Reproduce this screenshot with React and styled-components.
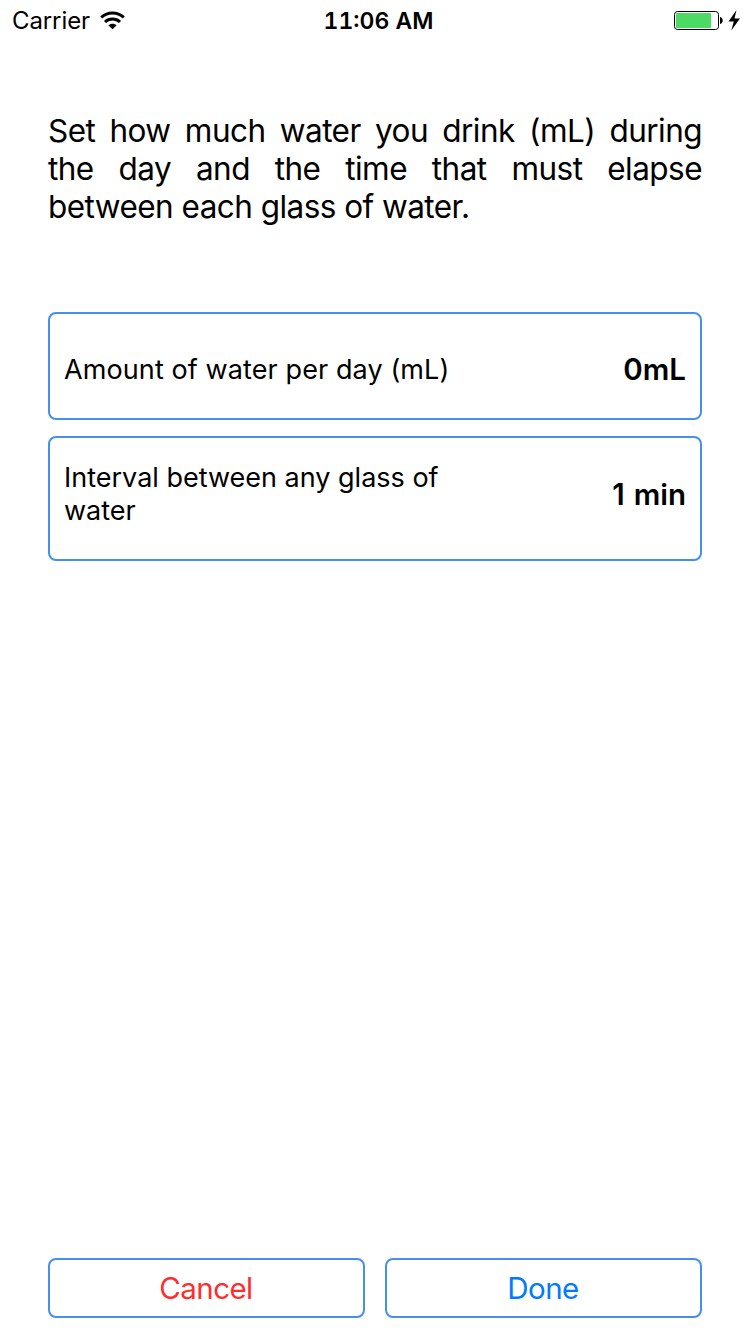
import React from "react";
import styled, { createGlobalStyle } from "styled-components";

const Global = createGlobalStyle`
  * { box-sizing: border-box; }
  body { margin: 0; background: #fff; color: #000; font-family: Inter, "Liberation Sans", sans-serif; }
`;
const Screen = styled.div`
  width: 750px; height: 1334px; display: flex; flex-direction: column; background: #fff; overflow: hidden;
`;
const StatusBar = styled.header`
  height: 41px; display: grid; grid-template-columns: 1fr auto 1fr; align-items: center;
  padding: 0 9px 0 12px;
`;
const Carrier = styled.div`
  display: flex; align-items: center; gap: 10px; font-size: 24px; line-height: 40px; letter-spacing: -0.1px; padding-top: 1px;
  svg { margin-bottom: 2px; }
`;
const Clock = styled.div`
  font-size: 23px; line-height: 40px; font-weight: 600; letter-spacing: 0; padding: 1px 0 0 4px;
  font-variant-numeric: tabular-nums;
`;
const Power = styled.div`
  display: flex; justify-content: flex-end; align-items: center;
`;
const Content = styled.main`
  flex: 1; display: flex; flex-direction: column; padding: 71px 48px 16px;
`;
const Intro = styled.p`
  margin: 0 0 86px; font-size: 31.5px; line-height: 38px; text-align: justify; letter-spacing: -0.54px;
`;
const Field = styled.section`
  height: ${(p) => p.$height}px; margin-bottom: 16px; padding: ${(p) => p.$top}px 14px 0 14px;
  border: 2px solid #4490ec; border-radius: 8px;
  display: flex; align-items: flex-start; justify-content: space-between;
`;
const Label = styled.div`
  width: 400px; font-size: 27px; line-height: 33px; letter-spacing: ${(p) => p.$track || 0}px;
`;
const Value = styled.div`
  font-size: 29.5px; line-height: 33px; font-weight: 600; word-spacing: 1.5px; padding-top: ${(p) => p.$drop || 0}px;
`;
const Actions = styled.footer`
  margin-top: auto; display: grid; grid-template-columns: 1fr 1fr; gap: 20px;
`;
const Button = styled.button`
  height: 60px; border: 2px solid #4490ec; border-radius: 8px; background: #fff; padding: 1px 1px 0 0;
  color: ${(p) => p.$color}; font: 400 29.5px/55px Inter, "Liberation Sans", sans-serif; letter-spacing: -0.55px;
`;

export default function App() {
  return (
    <Screen>
      <Global />
      <StatusBar>
        <Carrier>
          <span>Carrier</span>
          <svg width="25" height="19" viewBox="0 0 25 19" fill="none" stroke="#000" strokeWidth="3">
            <path d="M1.200 6.300C7.700 0.500 17.300 0.500 23.800 6.300" />
            <path d="M5 11c4.200-3.900 10.800-3.900 15 0" />
            <path d="M12.500 18.200l-4.200-3.900c2.400-2.200 6-2.200 8.400 0z" fill="#000" stroke="none" />
          </svg>
        </Carrier>
        <Clock>11:06 AM</Clock>
        <Power>
          <svg width="67" height="21" viewBox="0 0 67 21">
            <rect x="0.500" y="1.500" width="44" height="18" rx="3" fill="#fff" stroke="#000" />
            <rect x="2" y="3" width="35" height="15" rx="1" fill="#4cd964" />
            <path d="M46 7c3.600 .5 3.600 6.500 0 7z" />
            <path d="M62.500 0L54.500 11.500h5.300L57.300 20.500 66 8.500h-5.500z" />
          </svg>
        </Power>
      </StatusBar>
      <Content>
        <Intro>Set how much water you drink (mL) during the day and the time that must elapse between each glass of water.</Intro>
        <Field $height={108} $top={39}>
          <Label $track={0.1}>Amount of water per day (mL)</Label>
          <Value>0mL</Value>
        </Field>
        <Field $height={125} $top={23}>
          <Label>Interval between any glass of water</Label>
          <Value $drop={17}>1 min</Value>
        </Field>
        <Actions>
          <Button $color="#ff2d2d">Cancel</Button>
          <Button $color="#007aff">Done</Button>
        </Actions>
      </Content>
    </Screen>
  );
}
